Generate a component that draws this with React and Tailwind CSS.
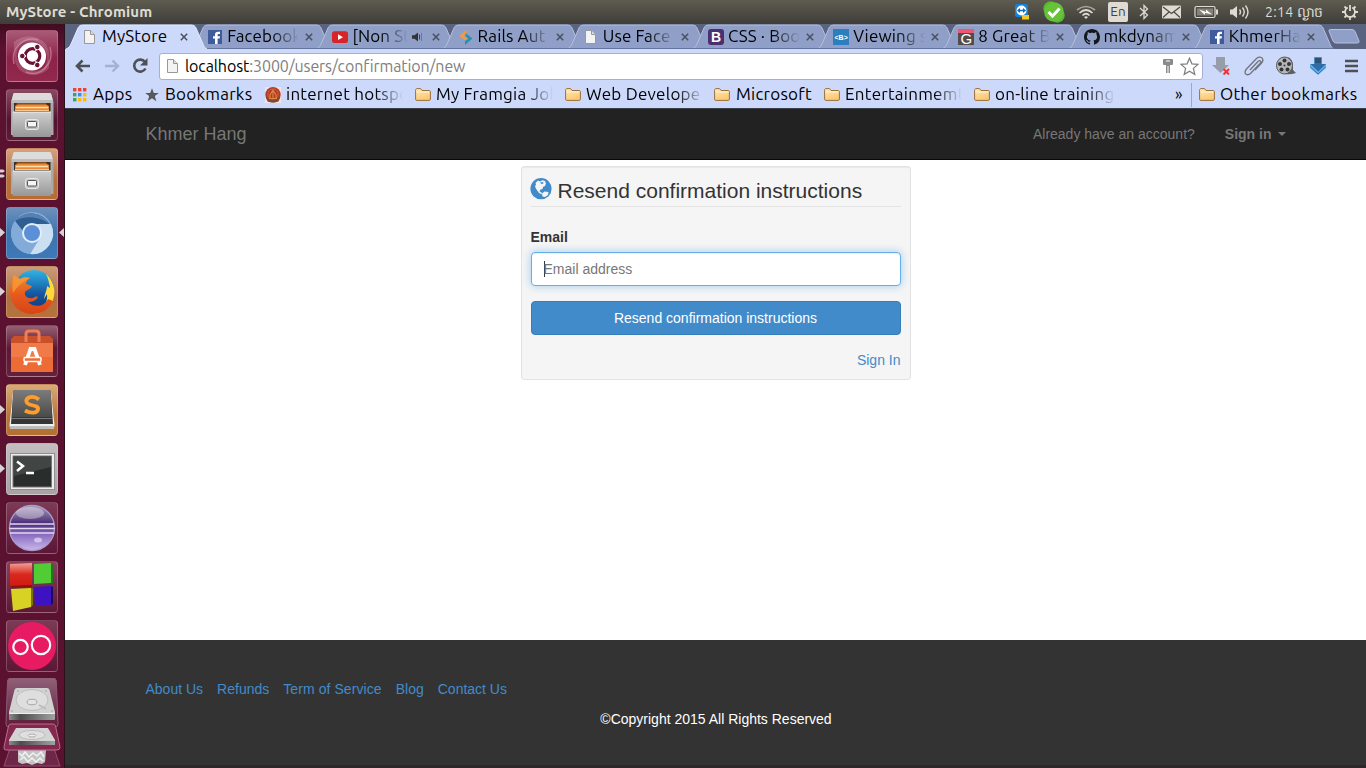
import React from "react";

const UF = "font-['Ubuntu','Noto_Sans',sans-serif]";

function TabShape({ active }) {
  return (
    <svg className="absolute left-0 top-0 h-[25px] w-[141px]" viewBox="0 0 141 25">
      <path d="M0 25 C3 24 4 22 5 20 L12 4 C13 2 14 1 17 1 L125 1 C128 1 129 2 130 4 L137 20 C138 23 139 24 141 25 Z" fill={active ? "#cdd9fa" : "#8f9fc7"} />
      <path d="M0 25 C3 24 4 22 5 20 L12 4 C13 2 14 1 17 1 L125 1 C128 1 129 2 130 4 L137 20 C138 23 139 24 141 25" fill="none" stroke={active ? "#e4ebfd" : "#b5c1df"} strokeWidth="1" />
      {!active && <path d="M0 24.5H141" stroke="#66759b" />}
    </svg>
  );
}

const Page = () => (
  <svg width="16" height="16" viewBox="0 0 16 16"><path d="M2.500 1.500H8.500L12.500 5.500V14.500H2.500Z" fill="#f3f3f3" stroke="#989898" /><path d="M8.500 1.500V5.500H12.500" fill="#ddd" stroke="#989898" /></svg>
);
const Facebook = () => (
  <svg width="16" height="16" viewBox="0 0 16 16"><rect x="1" y="1" width="14" height="14" fill="#3f5b9b" /><path d="M8 15V9.500H6V7.200H8V5.600C8 3.600 9.200 2.800 11 2.800H13V5.100H11.600C10.900 5.100 10.600 5.400 10.600 6V7.200H13L12.600 9.500H10.600V15Z" fill="#fff" /></svg>
);
const Youtube = () => (
  <svg width="16" height="16" viewBox="0 0 16 16"><rect y="2.300" width="16" height="11.700" rx="2.500" fill="#d62428" /><path d="M6 5.300L11 8.200L6 11Z" fill="#fff" /></svg>
);
const Rails = () => (
  <svg width="16" height="16" viewBox="0 0 16 16"><path d="M8.500 1V5L5.800 7L8.500 9.200V12L1.200 7Z" fill="#f79a3e" /><path d="M7 16V12L10.500 9.700L7.500 7V4L14.500 9.500Z" fill="#2b8fae" /></svg>
);
const Boot = () => (
  <div className="flex size-4 items-center justify-center rounded-[3px] bg-[#4b2f73] font-['Liberation_Sans',sans-serif] text-[14px] leading-none font-bold text-white">B</div>
);
const ViewI = () => (
  <div className="flex size-4 items-center justify-center bg-[#2b7fbe] font-['Liberation_Sans',sans-serif] text-[7px] leading-none font-bold text-white"><span>&lt;B&gt;</span></div>
);
const GreatI = () => (
  <div className="flex size-4 items-center justify-center border-t-4 border-[#f0566d] bg-[#554c4a] font-['Liberation_Sans',sans-serif] text-[15px] leading-none text-white"><span className="relative -top-px">G</span></div>
);
const Github = () => (
  <svg width="16" height="16" viewBox="0 0 16 16"><path fill="#14181d" d="M8 0C3.58 0 0 3.58 0 8c0 3.54 2.29 6.53 5.47 7.59.4.07.55-.17.55-.38 0-.19-.01-.82-.01-1.49-2.01.37-2.53-.49-2.69-.94-.09-.23-.48-.94-.82-1.13-.28-.15-.68-.52-.01-.53.63-.01 1.08.58 1.23.82.72 1.21 1.87.87 2.33.66.07-.52.28-.87.51-1.07-1.78-.2-3.64-.89-3.64-3.95 0-.87.31-1.59.82-2.15-.08-.2-.36-1.02.08-2.12 0 0 .67-.21 2.2.82.64-.18 1.32-.27 2-.27s1.36.09 2 .27c1.53-1.04 2.2-.82 2.2-.82.44 1.1.16 1.92.08 2.12.51.56.82 1.27.82 2.15 0 3.07-1.87 3.75-3.65 3.95.29.25.54.73.54 1.48 0 1.07-.01 1.93-.01 2.2 0 .21.15.46.55.38A8.01 8.01 0 0016 8c0-4.42-3.58-8-8-8z" /></svg>
);
const Folder = () => (
  <svg className="shrink-0" width="16" height="16" viewBox="0 0 16 16">
    <defs><linearGradient id="fold" x1="0" y1="0" x2="0.4" y2="1"><stop offset="0" stopColor="#ffeab8" /><stop offset="1" stopColor="#fbc873" /></linearGradient></defs>
    <path d="M.6 3.200C.6 2.400 1 1.600 1.800 1.600H5.600L7 3.500H14C15 3.500 15.400 4 15.400 5V12C15.400 12.800 15 13.400 14.300 13.400H1.700C1 13.400.6 13 .6 12.200Z" fill="url(#fold)" stroke="#9a6f3a" /><path d="M1.500 5H14.400" stroke="#fff4d5" />
  </svg>
);

const tabs = [
  { icon: <Page />, label: "MyStore", active: true },
  { icon: <Facebook />, label: "Facebook" },
  { icon: <Youtube />, label: "[Non St", sound: true },
  { icon: <Rails />, label: "Rails Aut" },
  { icon: <Page />, label: "Use Face" },
  { icon: <Boot />, label: "CSS · Boo" },
  { icon: <ViewI />, label: "Viewing s" },
  { icon: <GreatI />, label: "8 Great B" },
  { icon: <Github />, label: "mkdynam" },
  { icon: <Facebook />, label: "KhmerHa" },
];

const FADE = "[mask-image:linear-gradient(to_right,black_calc(100%-28px),transparent)]";

function Tab({ t }) {
  return (
    <div className={"relative h-[25px] w-[125.2px] shrink-0 " + (t.active ? "z-10" : "")}>
      <TabShape active={t.active} />
      <div className="relative flex h-6 items-center pt-0.5 pl-[16px]">
        <div className="w-4 shrink-0">{t.icon}</div>
        <div className={"relative -top-px ml-[4px] overflow-hidden text-[17px] leading-6 tracking-[0.15px] whitespace-nowrap text-black " + UF + " " + (t.sound ? "w-[56px] " : "w-[72px] ") + (t.active ? "" : FADE)}>{t.label}</div>
        {t.sound && <svg className="mr-0.5 ml-1 shrink-0" width="12" height="12" viewBox="0 0 12 12"><path d="M0 4.300H2.500L6 1.500V10.500L2.500 7.700H0Z" fill="#333" /><path d="M7.500 3.500V8.500" stroke="#444" /><path d="M9.500 2V10" stroke="#777" /></svg>}
        <svg className="ml-[6px] shrink-0" width="8" height="8" viewBox="0 0 8 8"><path d="M.8 .8L7.200 7.200M7.200 .8L.8 7.200" stroke="#4a4f5c" strokeWidth="1.500" /></svg>
      </div>
    </div>
  );
}

function Hotspot() {
  return <svg width="16" height="16" viewBox="0 0 16 16"><rect width="16" height="16" fill="#f3e3dc" /><circle cx="8" cy="7.700" r="7.700" fill="#b23a2c" /><circle cx="8" cy="7" r="5.200" fill="none" stroke="#d0622c" /><path d="M5 11V8L8 3L11 8V11M4 11.500H12M8 5V11" fill="none" stroke="#dc8a3a" strokeWidth="1.100" /><path d="M1 10.500Q8 15.500 15 10.500L13.500 14.500Q8 16.500 2.500 14.500Z" fill="#7a4a40" /></svg>;
}
const AppsI = () => (
  <svg width="14" height="14" viewBox="0 0 14 14">
    {["#ea4335", "#ea4335", "#ea4335", "#34a853", "#4285f4", "#fbbc05", "#34a853", "#fbbc05", "#fbbc05"].map((c, i) => <rect key={i} x={(i % 3) * 5} y={Math.floor(i / 3) * 5} width="3.400" height="3.400" fill={c} />)}
  </svg>
);
const BkStar = () => <svg width="14" height="14" viewBox="0 0 14 14"><path d="M7 .3L8.800 5H13.800L9.800 8.100L11.300 13.200L7 10.200L2.700 13.200L4.200 8.100L.2 5H5.200Z" fill="#55585e" /></svg>;

const marks = [
  { icon: <AppsI />, label: "Apps", box: "ml-2 w-[72px]", gap: "ml-[6px]", w: "w-[42px]" },
  { icon: <BkStar />, label: "Bookmarks", box: "w-[120px]", gap: "ml-[6px]", w: "w-[94px]" },
  { icon: <Hotspot />, label: "internet hotspo", box: "w-[150px]", gap: "ml-[5px]", w: "w-[117px]", fade: true },
  { icon: <Folder />, label: "My Framgia Job", box: "w-[150px]", gap: "ml-[5px]", w: "w-[117px]", fade: true },
  { icon: <Folder />, label: "Web Develope", box: "w-[149px]", gap: "ml-[5px]", w: "w-[118px]", fade: true },
  { icon: <Folder />, label: "Microsoft", box: "w-[110px]", gap: "ml-[6px]", w: "w-[84px]" },
  { icon: <Folder />, label: "Entertainmemt", box: "w-[150px]", gap: "ml-[5px]", w: "w-[117px]", fade: true },
  { icon: <Folder />, label: "on-line training", box: "w-[201px]", gap: "ml-[5px]", w: "w-[120px]", fade: true },
];

function Cabinet() {
  return <>
    <path d="M8 4H44Q45 4 45.500 6L47.500 13V46H5V13L7 6Q7.500 4 8 4Z" fill="#a9a9a9" />
    <path d="M8 4H44Q45 4 45.500 6L47 12H5.500L7 6Q7.500 4 8 4Z" fill="#dcdcdc" /><path d="M5.500 11H47V14H5.500Z" fill="#bdbdbd" />
    <path d="M8 14H44.500V23H8Z" fill="#3b302c" /><path d="M11 14H40L41 16H10Z" fill="#8a4a22" /><path d="M9 17L12 15.500H40L43 17V22H9Z" fill="#ea8a35" /><path d="M10 18.500H42" stroke="#ffe2a7" strokeWidth="1.400" /><path d="M9 21.500H43" stroke="#f9c58b" />
    <path d="M6.500 23H45V47Q45 48 44 48H8Q6.500 48 6.500 46.500Z" fill="url(#silver)" /><path d="M7 23H45" stroke="#f4f4f4" />
    <rect x="19.500" y="30.500" width="13" height="10" rx="2" fill="#c0c0c0" stroke="#e8e8e8" /><rect x="21.500" y="32.500" width="9" height="5.500" rx="1" fill="#f5f5f5" stroke="#555" />
  </>;
}
function Drive() {
  return <>
    <path d="M11 10H41Q43 10 43.500 12L49 34V40Q49 42 47 42H5Q3 42 3 40V34L8.500 12Q9 10 11 10Z" fill="#d2d2d2" /><path d="M3 36H49V40Q49 42 47 42H5Q3 42 3 40Z" fill="url(#driveFront)" /><path d="M3.500 35.500H48.500" stroke="#efefef" />
    <ellipse cx="26" cy="22" rx="16" ry="10.500" fill="#dedede" stroke="#bdbdbd" /><ellipse cx="26" cy="24" rx="5" ry="2.800" fill="#e2e2e2" stroke="#a8a8a8" /><path d="M33 27L40 31" stroke="#bbb" strokeWidth="2" />
    <g fill="#999"><circle cx="12" cy="13" r=".8" /><circle cx="40" cy="13" r=".8" /><circle cx="6" cy="33" r=".8" /><circle cx="46" cy="33" r=".8" /></g>
  </>;
}

const launch = [
  { bg: "bg-[linear-gradient(#a95a77,#8d2248_55%,#922a4d)]", art: <>
    <path d="M8 12C20 2 40 6 43 22C45 30 41 37 36 40C44 34 42 20 34 14C26 8 14 10 8 22Z" fill="#fff" opacity=".16" />
    <path d="M43 38C33 50 12 46 9 31C7 23 11 16 16 13C8 19 9 32 18 38C26 44 38 42 43 30Z" fill="#fff" opacity=".16" />
    <path d="M8 34C4 18 18 6 32 10M44 17C49 34 34 48 20 42" fill="none" stroke="#e0a8bc" strokeWidth="1.500" opacity=".5" />
    <circle cx="26" cy="26.500" r="14" fill="#fff" /><circle cx="26.500" cy="26" r="7.300" fill="none" stroke="#6b1235" strokeWidth="3.200" />
    <g stroke="#fff" strokeWidth="1.300"><path d="M20 26H14M29.500 21L32.500 16M29.500 31L32.500 36" /></g><g fill="#6b1235" stroke="#fff" strokeWidth="1"><circle cx="16.300" cy="26" r="2.800" /><circle cx="31.300" cy="17" r="2.800" /><circle cx="31.300" cy="35" r="2.800" /></g></> },
  { bg: "bg-[linear-gradient(#8a4a62,#53122e_60%,#5f1a38)]", art: <Cabinet /> },
  { bg: "bg-[linear-gradient(#d6a17e,#b4713e_60%,#b86b33)]", art: <Cabinet />, run: 2 },
  { bg: "bg-[linear-gradient(#6d90bd,#3e74ae_50%,#3e78b6)]", run: 1, focus: true, art: <>
    <circle cx="26" cy="26" r="21" fill="#86aedb" /><path d="M9 14A21 21 0 0 1 43.500 17H26L17 24Z" fill="#2f5f92" /><path d="M9 14A21 21 0 0 1 43.500 17C34 9 18 8 9 14Z" fill="#5582b3" />
    <path d="M26 17H45A21 21 0 0 1 24 47L34.500 30Z" fill="#cbdff3" /><path d="M9 14A21 21 0 0 0 24 47L32 34L18 30Z" fill="#83abd9" />
    <circle cx="26" cy="26" r="10" fill="#e3eefa" /><circle cx="26" cy="26" r="8" fill="#5b90d8" /></> },
  { bg: "bg-[linear-gradient(#cb9b79,#b0713f_60%,#b5723d)]", run: 1, art: <>
    <circle cx="28" cy="24" r="20" fill="url(#ffblue)" />
    <path d="M40 8C44 11 50 20 48 30C46 42 36 48 27 48C38 44 42 36 41 28L38 33C39 27 41 24 41 20L44 22C43 16 42 12 40 8Z" fill="#ffd93a" />
    <path d="M8 9L14 13C17 11 21 11 24 12C21 14 20 16 20 18L26 20C25 23 20 24 19 26C18 30 22 33 27 32C29 31 30 30 32 31C30 35 26 36 22 36C28 42 38 41 42 33L47 35C43 44 36 48 27 48C13 48 4 38 4 26C4 19 6 15 8 9Z" fill="url(#fox)" />
    <path d="M8 9L14 13C17 11 21 11 24 12C18 15 12 19 7 27C6 20 6 14 8 9Z" fill="#f89a3a" opacity=".8" /></> },
  { bg: "bg-[linear-gradient(#946072,#5e1734_45%,#64203c)]", art: <>
    <path d="M5 14H47V47H5Z" fill="#ed6b35" /><path d="M5 14L8 11H44L47 14V18H5Z" fill="#c8502a" /><path d="M5 18H47V32H5Z" fill="#f07a48" /><path d="M20 17V9Q20 6 23 6H30Q33 6 33 9V17" fill="none" stroke="#ef7f52" strokeWidth="3" />
    <path d="M19 40L24.500 24H28.500L34 40" fill="none" stroke="#fff" strokeWidth="3.800" /><rect x="18" y="32.500" width="17" height="4" rx="1" fill="#ed6b35" stroke="#fff" strokeWidth="1.500" /></> },
  { bg: "bg-[linear-gradient(#d9aa7a,#b6783c_60%,#b3712f)]", run: 1, art: <>
    <path d="M7 8H45L48.500 41Q48.500 45 46 45H6Q3.500 45 3.500 41Z" fill="#efefef" /><path d="M4 42H48V45H4Z" fill="#bdbdbd" /><path d="M9 6H43Q44.500 6 44.700 8L47 40H5L7.300 8Q7.500 6 9 6Z" fill="#353535" /><path d="M9 6H43Q44.500 6 44.700 8L46 33H6L7.300 8Q7.500 6 9 6Z" fill="url(#key)" /><path d="M6 34.500H46" stroke="#7d7d7d" />
    <path d="M33 15.500C27 11 19.500 13 20.500 18C21.500 22.500 33 20 32 25.500C31 29.500 24 29.500 19 26.500" fill="none" stroke="#ff9d2c" strokeWidth="3.800" /></> },
  { bg: "bg-[linear-gradient(#c3bec0,#aaa2a5)]", run: 1, art: <>
    <rect x="4.500" y="10.500" width="44" height="36" fill="#eee" stroke="#8f8f8f" /><rect x="7" y="13" width="38.500" height="31" fill="#292d2b" stroke="#777" /><path d="M8 14H45V24L8 33Z" fill="#414644" />
    <path d="M11 18.500L17 23L11 28M20 30H28" fill="none" stroke="#fff" strokeWidth="2.500" /></> },
  { bg: "bg-[linear-gradient(#7d3a55,#5b1736)]", art: <>
    <circle cx="26" cy="26" r="22.500" fill="url(#orb)" stroke="#a99ac8" strokeWidth="1.400" /><path d="M4 22H48M3.500 26.500H48.500M4 31H48" stroke="#e2d8f2" strokeWidth="1.500" /><ellipse cx="24" cy="11" rx="14" ry="6" fill="#fff" opacity=".35" /><ellipse cx="32" cy="38" rx="4" ry="2.500" fill="#fff" opacity=".5" /></> },
  { bg: "bg-[linear-gradient(#87405c,#5c1836)]", art: <>
    <path d="M4 3L26 2V24L4 25Z" fill="url(#redcube)" /><path d="M4 25L26 24V26L6 27Z" fill="#8d120d" /><path d="M28 3L45 2V22L28 23Z" fill="#52cc35" /><path d="M45 2L47 4V22L45 23Z" fill="#1f7a18" />
    <path d="M5 28L25 27V46L7 50Z" fill="#d7d223" /><path d="M25 27L27 28V44L25 46Z" fill="#77730d" /><path d="M28 26L45 25V44L29 44Z" fill="#3d12c0" /><path d="M45 25L47 26V42L45 44Z" fill="#1d0764" /></> },
  { bg: "bg-[linear-gradient(#7d3a55,#5b1736)]", art: <>
    <circle cx="26" cy="26" r="24" fill="#e61b62" /><circle cx="14.500" cy="27" r="7.200" fill="none" stroke="#fff" strokeWidth="2.200" /><circle cx="35" cy="25" r="9.200" fill="none" stroke="#fff" strokeWidth="2.200" /></> },
];

function Launcher() {
  return (
    <aside className="relative flex h-[744px] w-[65px] shrink-0 flex-col overflow-hidden border-r border-[#28101c] bg-[#5b1130] bg-[linear-gradient(#420c20,#5b1130_24px)] pt-[6px]">
      {launch.map((l, i) => (
        <div key={i} className="relative mb-[7px] flex h-[52px] shrink-0 pl-[6px]">
          <div className={"size-[52px] overflow-hidden rounded-[4px] border border-white/20 " + l.bg}>
            <svg className="-mt-px -ml-px" width="52" height="52" viewBox="0 0 52 52">
              <defs>
                <linearGradient id="silver" x1="0" y1="0" x2="0" y2="1"><stop offset="0" stopColor="#cfcfcf" /><stop offset="1" stopColor="#979797" /></linearGradient>
                <linearGradient id="orb" x1="0" y1="0" x2="0" y2="1"><stop offset="0" stopColor="#aaa0bd" /><stop offset=".4" stopColor="#4a2c78" /><stop offset=".65" stopColor="#8b6cc0" /><stop offset="1" stopColor="#c9b8ec" /></linearGradient>
                <linearGradient id="ffblue" x1="0" y1="0" x2="0" y2="1"><stop offset="0" stopColor="#2fb4e6" /><stop offset=".6" stopColor="#15559f" /><stop offset="1" stopColor="#123a7c" /></linearGradient>
                <linearGradient id="fox" x1="0" y1="0" x2="0" y2="1"><stop offset="0" stopColor="#f08a2e" /><stop offset=".5" stopColor="#e65a1e" /><stop offset="1" stopColor="#d94416" /></linearGradient>
                <linearGradient id="key" x1="0" y1="0" x2="0" y2="1"><stop offset="0" stopColor="#7c7c7c" /><stop offset="1" stopColor="#4a4a4a" /></linearGradient>
                <linearGradient id="redcube" x1="0" y1="0" x2="0" y2="1"><stop offset="0" stopColor="#f0a097" /><stop offset=".5" stopColor="#d9281d" /><stop offset="1" stopColor="#cf1c12" /></linearGradient>
              </defs>
              {l.art}
            </svg>
          </div>
          {l.run && <svg className="absolute top-[20px] left-0" width="6" height="10" viewBox="0 0 6 10">{l.run === 2 ? <path d="M0 1.500H3L5 3L3 4.500H0ZM0 6.500H3L5 8L3 9.500H0Z" fill="#d8d2d4" /> : <path d="M0 1L5 5.500L0 10Z" fill="#d8d2d4" />}</svg>}
          {l.focus && <svg className="absolute top-[20px] right-0" width="5" height="10" viewBox="0 0 5 10"><path d="M5 1L0 5.500L5 10Z" fill="#d8d2d4" /></svg>}
        </div>
      ))}
      <svg className="-mt-[1px] ml-[3px] shrink-0" width="58" height="92" viewBox="0 0 58 92">
        <defs>
          <linearGradient id="tile" x1="0" y1="0" x2="0" y2="1"><stop offset="0" stopColor="#91617a" /><stop offset="1" stopColor="#5d1a38" /></linearGradient>
          <linearGradient id="driveFront" x1="0" y1="0" x2="1" y2="0"><stop offset="0" stopColor="#8c8c8c" /><stop offset=".25" stopColor="#4c4c4c" /><stop offset="1" stopColor="#a2a2a2" /></linearGradient>
        </defs>
        <path d="M8 0H50Q53 0 53.300 3L55 46Q55 49 52 49H6Q3 49 3 46L4.500 3Q5 0 8 0Z" fill="url(#tile)" stroke="#8a5a70" />
        <g transform="translate(3 0)"><Drive /></g>
        <path d="M7 70H51L57 88H1Z" fill="#6e2747" stroke="#8e5069" />
        <path d="M15 72L43 72L42 84L39 86L34 85L29 87L24 85L19 86L15 84Z" fill="#c4c4c4" /><path d="M16 75L19 78L22 74L26 79L30 75L34 78L38 74L41 79M17 82L21 79L25 84L29 80L33 84L37 80L40 83" fill="none" stroke="#f2f2f2" strokeWidth="1.500" />
        <path d="M8 46H50Q52 46 52.500 48L57 69Q57 72 54 72H3Q.500 72 1 69L5.500 48Q6 46 8 46Z" fill="#84284f" stroke="#b96f8d" />
        <path d="M13 50H45L52 62V67H6V62Z" fill="#d4d4d4" /><path d="M6 63H52V67H6Z" fill="url(#driveFront)" /><ellipse cx="29" cy="57" rx="13" ry="4.500" fill="#e0e0e0" stroke="#bcbcbc" /><ellipse cx="29" cy="57.500" rx="4" ry="1.500" fill="#eee" stroke="#aaa" />
      </svg>
    </aside>
  );
}

function SystemBar() {
  const c = "#dfdbd2";
  return (
    <header className={"flex h-6 items-center bg-[linear-gradient(#5e5c50,#3e3d39)] pr-2 pl-[6px] text-[#dfdbd2] " + UF}>
      <div className="flex-1 text-[15px] leading-6 font-bold tracking-[0.12px] whitespace-nowrap">MyStore - Chromium</div>
      <svg width="16" height="18" viewBox="0 0 16 18"><rect x="1" y="1" width="13" height="13" rx="2" fill="#1284dc" /><circle cx="7.500" cy="7.500" r="5" fill="#fff" /><path d="M3 7.500L6 5V6.800H9V5L12 7.500L9 10V8.200H6V10Z" fill="#0e6ebd" /><rect x="8" y="12" width="7" height="4.500" fill="#f2c72b" /></svg>
      <svg className="ml-[13px]" width="22" height="22" viewBox="0 0 22 22"><circle cx="7.500" cy="7.500" r="7.200" fill="#58b82f" /><circle cx="14.500" cy="14.500" r="7.200" fill="#58b82f" /><circle cx="11" cy="11" r="9.800" fill="#66c238" /><path d="M5.500 11L9.500 15L16.500 7.500" fill="none" stroke="#fff" strokeWidth="3" /></svg>
      <svg className="ml-[11px]" width="20" height="16" viewBox="0 0 20 16"><g fill="none" stroke={c} strokeWidth="1.700"><path d="M1 6Q10-1 19 6" opacity=".6" /><path d="M3.500 9Q10 3 16.500 9" /><path d="M6.500 11.500Q10 8 13.500 11.500" /></g><path d="M8 13Q10 11.500 12 13L10 15Z" fill={c} /></svg>
      <div className="ml-[12px] flex h-5 w-5 items-center justify-center rounded-[2px] bg-[#dfdbd2] text-[13.500px] leading-none text-[#45433d]">En</div>
      <svg className="ml-[11px]" width="10" height="16" viewBox="0 0 10 16"><path d="M1 4L8.500 11L5 14.500V1.500L8.500 5L1 12" fill="none" stroke={c} strokeWidth="1.300" /></svg>
      <svg className="ml-[13px]" width="19" height="14" viewBox="0 0 19 14"><rect width="19" height="13" y=".5" rx="1" fill={c} /><path d="M1 2L9.500 8.500L18 2M1 12.500L7 7M18 12.500L12 7" fill="none" stroke="#4a4943" strokeWidth="1.200" /></svg>
      <svg className="ml-[13px]" width="25" height="14" viewBox="0 0 25 14"><rect x="1" y="1.500" width="20" height="11" rx="1.500" fill="none" stroke={c} strokeWidth="1.200" /><rect x="3" y="3.500" width="16" height="7" fill="#85827a" /><path d="M5 4.500L12 7V4.500L18 9.500L11 7.800V10Z" fill="#fff" /><path d="M22 4.500H24V9.500H22Z" fill={c} /></svg>
      <svg className="ml-[10px]" width="21" height="16" viewBox="0 0 21 16"><path d="M1 5.500H3.500L8 2V14L3.500 10.500H1Z" fill={c} /><path d="M10.500 5.500Q12.500 8 10.500 10.500M13.500 3.500Q17 8 13.500 12.500M16.500 1.500Q21.500 8 16.500 14.500" fill="none" stroke={c} strokeWidth="1.400" /></svg>
      <div className="ml-[15px] w-[65px] text-[14px] leading-6 tracking-[0.3px] whitespace-nowrap">2:14 ល្ងាច</div>
      <svg className="ml-[12px]" width="16" height="16" viewBox="0 0 16 16"><g fill="none" stroke={c}><path d="M5.700 3.500A5 5 0 1 0 10.300 3.500" strokeWidth="1.800" /><path d="M8 1V7" strokeWidth="1.800" /><path d="M2.500 2.500L4.500 4.500M13.500 2.500L11.500 4.500M0 8H3M13 8H16M2.500 13.500L4.500 11.500M13.500 13.500L11.500 11.500M8 13V16" strokeWidth="1.800" /></g></svg>
    </header>
  );
}

function Toolbar() {
  return (
    <div className="flex h-[33px] items-center bg-[#cdd9fa] pt-px pl-[9px]">
      <svg width="18" height="16" viewBox="0 0 18 16"><path d="M16 8H3M8.500 2.500L3 8L8.500 13.500" fill="none" stroke="#4d5157" strokeWidth="2.600" /></svg>
      <svg className="ml-[11px]" width="18" height="16" viewBox="0 0 18 16"><path d="M2 8H15M9.500 2.500L15 8L9.500 13.500" fill="none" stroke="#a6b1cf" strokeWidth="2.400" /></svg>
      <svg className="ml-[10px]" width="18" height="18" viewBox="0 0 18 18"><path d="M14 5A6 6 0 1 0 14.500 11.500" fill="none" stroke="#4d5157" strokeWidth="2.600" /><path d="M16.500 1V8.500H9Z" fill="#4d5157" /></svg>
      <div className="ml-[10px] flex h-[27px] w-[1044px] items-center rounded-[3px] border border-[#a5b0cf] bg-white pl-[5px]">
        <Page />
        <div className={"ml-[4px] flex-1 text-[16px] leading-6 tracking-[-0.1px] whitespace-nowrap text-[#808080] " + UF}><span className="text-black">localhost</span>:3000/users/confirmation/new</div>
        <svg width="12" height="16" viewBox="0 0 12 16"><path d="M2 1H10Q11 1 11 2V6Q11 7 10 7H8V15H4V7H2Q1 7 1 6V2Q1 1 2 1Z" fill="#8b8b8b" /><path d="M4 3H8M6 8V15" stroke="#fff" /></svg>
        <svg className="mr-[3px] ml-[6px]" width="19" height="19" viewBox="0 0 18 18"><path d="M9 1.200L11.300 6.500L17 7L12.700 10.800L14 16.500L9 13.500L4 16.500L5.300 10.800L1 7L6.700 6.500Z" fill="#fff" stroke="#808080" strokeWidth="1.200" /></svg>
      </div>
      <svg className="ml-[9px]" width="18" height="18" viewBox="0 0 18 18"><path d="M4 0H13V8H17L8.500 16L0 8H4Z" fill="#989dab" /><path d="M11.500 12L17 17.500M17 12L11.500 17.500" stroke="#ee3338" strokeWidth="2" /></svg>
      <svg className="ml-[14px]" width="20" height="20" viewBox="0 0 20 20"><path d="M6 14L14 5.500Q15.500 4 16.500 5Q17.500 6 16 7.500L7 17Q4 20 1.800 18Q0 16 2.500 13L12.500 2.500Q15 .500 17.500 1.500Q20 3.500 18 6.500L11 14" fill="none" stroke="#70747d" strokeWidth="1.300" /></svg>
      <svg className="ml-[12px]" width="20" height="20" viewBox="0 0 20 20"><path d="M9 1.500H13Q17 4 17 10V14L20 17Q14 19 9 18Z" fill="#5c5e60" /><ellipse cx="8.500" cy="9.500" rx="8" ry="8.500" fill="#b5b7b8" stroke="#555" /><g fill="#343638"><circle cx="8.500" cy="4.500" r="2" /><circle cx="4" cy="8" r="2" /><circle cx="13" cy="8" r="2" /><circle cx="5.500" cy="13.500" r="2" /><circle cx="11.500" cy="13.500" r="2" /><circle cx="8.500" cy="9.500" r="1" /></g></svg>
      <svg className="ml-[14px]" width="17" height="18" viewBox="0 0 17 18"><path d="M4 0H12V7H16V11L8 18L0 11V7H4Z" fill="#69aee4" /><path d="M4.500 .5H11.500V7H16L8.250 14.500L.5 7H4.500Z" fill="#2f6da8" /><path d="M5 1H11V6H5Z" fill="#2c5274" /><path d="M.5 10L8 17L15.500 10" fill="none" stroke="#2b7ac0" /></svg>
      <svg className="ml-[18px]" width="14" height="14" viewBox="0 0 14 14"><path d="M0 2H13M0 7H13M0 12H13" stroke="#4d5157" strokeWidth="2.600" /></svg>
    </div>
  );
}

function BookmarksBar() {
  return (
    <div className={"flex h-[26px] items-center overflow-hidden bg-[#cdd9fa] text-[17px] leading-[24px] tracking-[0.25px] whitespace-nowrap text-black " + UF}>
      {marks.map((m) => (
        <div key={m.label} className={"flex shrink-0 items-center " + m.box}>
          {m.icon}
          <div className={"relative -top-px overflow-hidden " + m.gap + " " + m.w + " " + (m.fade ? FADE : "")}>{m.label}</div>
        </div>
      ))}
      <div className="relative -top-px w-[16px] shrink-0 text-[16px]">»</div>
      <div className="mr-[7px] h-6 w-px shrink-0 bg-[#9ba8c9]" />
      <Folder />
      <div className="relative -top-px ml-[5px]">Other bookmarks</div>
    </div>
  );
}

function Globe() {
  return <svg className="-ml-px shrink-0" width="22" height="22" viewBox="0 0 22 22"><circle cx="11" cy="10.700" r="10.600" fill="#428bca" /><path d="M5.500 5L8 2.500L10 3.500L12.500 2.300L15 3L16 5.500L15 8L13 9L12.500 11L10.500 11.500L9.500 13.500L11.500 14.500L12 16.500L9 15L6.500 11.500L5 8.500L6 6.500Z" fill="#f5f5f5" /><path d="M12 15.500L14.500 13.500L18.500 14L18 17L15 19L12.500 18.500Z" fill="#f5f5f5" /><path d="M10 4.500L13 4L13.500 5.500L11.500 6Z" fill="#428bca" /></svg>;
}

export default function App() {
  return (
    <div className="h-[768px] w-[1366px] overflow-hidden bg-white font-['Liberation_Sans',sans-serif] text-[14px] leading-5">
      <SystemBar />
      <div className="flex">
        <Launcher />
        <main className="flex h-[744px] w-[1301px] flex-col">
          <div className="flex h-[25px] overflow-hidden bg-[#5a6380] pl-px">
            {tabs.map((t) => <Tab key={t.label} t={t} />)}
            <svg className="relative mt-[5px] ml-[10px] shrink-0" width="32" height="15" viewBox="0 0 32 15"><path d="M2.500 .5H24Q26 .5 27 2.500L31 12Q31.500 14 29.500 14H8Q6 14 5 12L1 2Q.5 .5 2.500 .5Z" fill="#8f9fc7" stroke="#b5c1df" /></svg>
          </div>
          <Toolbar />
          <BookmarksBar />
          <nav className="flex h-[52px] shrink-0 items-center border-t border-b border-t-[#3b3f48] border-b-[#080808] bg-[#222] pr-[80.500px] pl-[80.500px] text-[#777]">
            <div className="flex-1 text-[18px]">Khmer Hang</div>
            <div>Already have an account?</div>
            <div className="ml-[30px] flex items-center font-bold">Sign in<span className="ml-[6px] border-x-4 border-t-4 border-x-transparent border-t-[#777]" /></div>
          </nav>
          <section className="flex h-[480px] shrink-0 justify-center pt-[6px]">
            <div className="h-[214px] w-[390px] rounded-[3px] border border-[#e3e3e3] bg-[#f5f5f5] px-[9px] pt-[9px] text-[#333] shadow-[inset_0_1px_1px_rgba(0,0,0,0.05)]">
              <div className="flex h-[31px] border-b border-[#e5e5e5] pt-[2px] text-[21px] leading-[26px]"><Globe /><span className="ml-[6px]">Resend confirmation instructions</span></div>
              <div className="mt-5 mb-[5px] font-bold">Email</div>
              <div className="flex h-[34px] items-center rounded-[4px] border border-[#66afe9] bg-white pl-3 text-[#777] shadow-[inset_0_1px_1px_rgba(0,0,0,0.075),0_0_8px_rgba(102,175,233,0.6)]"><span className="h-4 w-px bg-[#333]" /><span className="-ml-px">Email address</span></div>
              <button className="mt-[15px] block h-[34px] w-full rounded-[4px] border border-[#357ebd] bg-[#428bca] text-white">Resend confirmation instructions</button>
              <div className="mt-[15px] text-right text-[#428bca]">Sign In</div>
            </div>
          </section>
          <footer className="h-[128px] shrink-0 border-b-[3px] border-[#2e2629] bg-[#333] pt-[39px]">
            <div className="flex gap-[14px] pl-[80.500px] text-[#428bca]"><span>About Us</span><span>Refunds</span><span className="tracking-[0.08px]">Term of Service</span><span>Blog</span><span>Contact Us</span></div>
            <div className="mt-[10px] pl-px text-center text-white">©Copyright 2015 All Rights Reserved</div>
          </footer>
        </main>
      </div>
    </div>
  );
}
